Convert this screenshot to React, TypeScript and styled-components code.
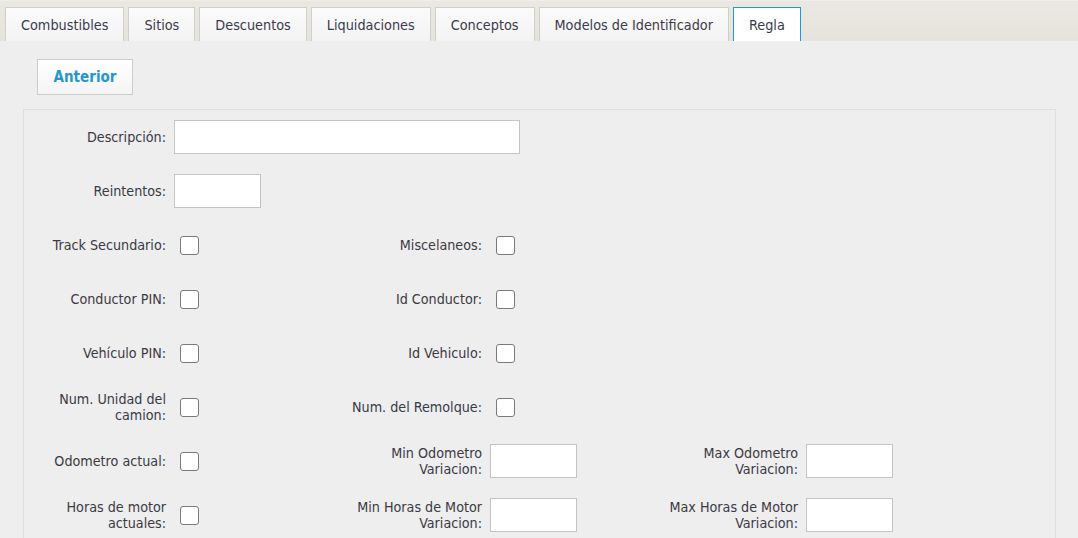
import React from "react";
import styled, { createGlobalStyle } from "styled-components";

const Global = createGlobalStyle`
  html, body { margin: 0; padding: 0; background: #eeeeee; }
  body { font-family: Tahoma, "DejaVu Sans Condensed", "DejaVu Sans", sans-serif; font-size: 14px; color: #333; }
`;

const TabBar = styled.div`
  display: flex;
  gap: 4px;
  height: 34px;
  padding: 6px 0 0 5px;
  border-top: 1px solid #eeeeee;
  background: linear-gradient(#eae8e1, #e5e3db);
`;

const Tab = styled.div<{ $active?: boolean }>`
  display: flex;
  align-items: center;
  padding: 0 15px;
  height: 34px;
  box-sizing: border-box;
  border: 1px solid ${(p) => (p.$active ? "#1a9bd6" : "#cfcfcb")};
  border-bottom: none;
  background: ${(p) => (p.$active ? "#ffffff" : "linear-gradient(#fbfbfb, #f3f3f3)")};
  color: #3a3a4c;
  font-size: 14.3px;
  white-space: nowrap;
`;

const Content = styled.div`
  padding: 18px 22px 0 23px;
`;

const Toolbar = styled.div`
  padding-left: 14px;
  margin-bottom: 14px;
`;

const Button = styled.button`
  height: 36px;
  width: 96px;
  border: 1px solid #cccccc;
  background: linear-gradient(#ffffff, #f4f4f4);
  color: #2796cf;
  font-family: inherit;
  font-weight: bold;
  font-size: 15px;
  cursor: pointer;
`;

const Panel = styled.div`
  border: 1px solid #e2e0d7;
  border-bottom: none;
  padding: 10px 2px 20px;
  min-height: 440px;
`;

const Grid = styled.div`
  display: grid;
  grid-template-columns: repeat(3, 140px 160px);
  column-gap: 8px;
  row-gap: 20px;
  grid-auto-rows: 34px;
`;

const Label = styled.label<{ $col?: number }>`
  grid-column: ${(p) => p.$col ?? 1};
  display: flex;
  align-items: center;
  justify-content: flex-end;
  text-align: right;
  line-height: 16px;
  font-size: 14.2px;
  color: #3a3a44;
`;

const Field = styled.div<{ $span?: number }>`
  display: flex;
  align-items: center;
  grid-column: span ${(p) => p.$span ?? 1};
`;

const TextInput = styled.input<{ $w: number }>`
  width: ${(p) => p.$w}px;
  height: 34px;
  box-sizing: border-box;
  border: 1px solid #c4c4c4;
  background: #fff;
  padding: 0 4px;
  font-family: inherit;
`;

const Check = styled.span`
  display: inline-block;
  width: 19px;
  height: 19px;
  box-sizing: border-box;
  margin-left: 6px;
  border: 1px solid #7a7a7a;
  border-radius: 3px;
  background: #fff;
`;

const tabs = [
  "Combustibles",
  "Sitios",
  "Descuentos",
  "Liquidaciones",
  "Conceptos",
  "Modelos de Identificador",
  "Regla",
];

export default function App() {
  return (
    <>
      <Global />
      <TabBar>
        {tabs.map((t) => (
          <Tab key={t} $active={t === "Regla"}>
            {t}
          </Tab>
        ))}
      </TabBar>
      <Content>
        <Toolbar>
          <Button>Anterior</Button>
        </Toolbar>
        <Panel>
          <Grid>
            <Label>Descripción:</Label>
            <Field $span={3}>
              <TextInput $w={346} />
            </Field>

            <Label>Reintentos:</Label>
            <Field>
              <TextInput $w={87} />
            </Field>

            <Label>Track Secundario:</Label>
            <Field><Check /></Field>
            <Label $col={3}>Miscelaneos:</Label>
            <Field><Check /></Field>

            <Label>Conductor PIN:</Label>
            <Field><Check /></Field>
            <Label $col={3}>Id Conductor:</Label>
            <Field><Check /></Field>

            <Label>Vehículo PIN:</Label>
            <Field><Check /></Field>
            <Label $col={3}>Id Vehiculo:</Label>
            <Field><Check /></Field>

            <Label>Num. Unidad del camion:</Label>
            <Field><Check /></Field>
            <Label $col={3}>Num. del Remolque:</Label>
            <Field><Check /></Field>

            <Label>Odometro actual:</Label>
            <Field><Check /></Field>
            <Label $col={3}>Min Odometro Variacion:</Label>
            <Field><TextInput $w={87} /></Field>
            <Label $col={5}>Max Odometro Variacion:</Label>
            <Field><TextInput $w={87} /></Field>

            <Label>Horas de motor actuales:</Label>
            <Field><Check /></Field>
            <Label $col={3}>Min Horas de Motor Variacion:</Label>
            <Field><TextInput $w={87} /></Field>
            <Label $col={5}>Max Horas de Motor Variacion:</Label>
            <Field><TextInput $w={87} /></Field>
          </Grid>
        </Panel>
      </Content>
    </>
  );
}
